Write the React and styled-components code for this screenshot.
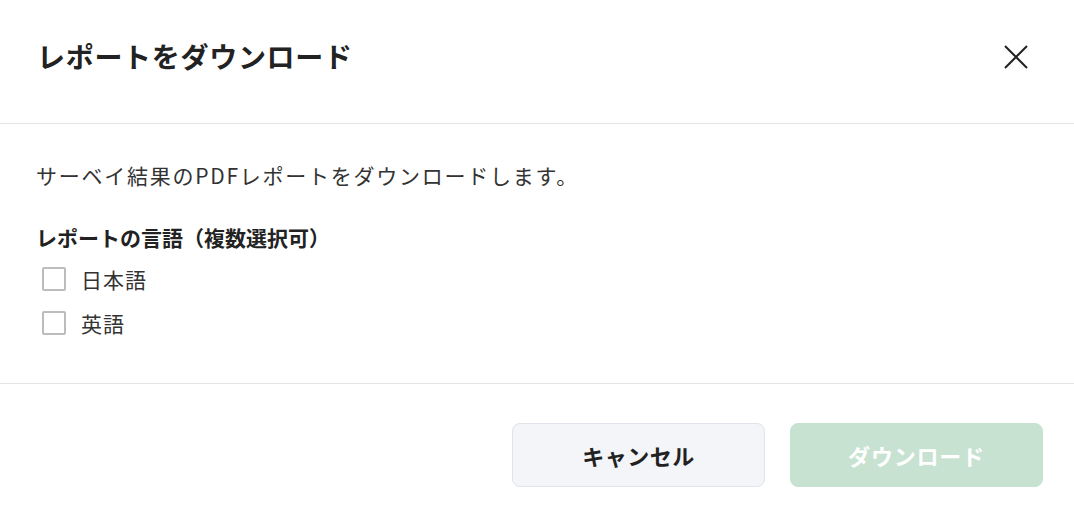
import React, { useState } from 'react'
import styled, { createGlobalStyle } from 'styled-components'

const GlobalStyle = createGlobalStyle`
  html, body {
    margin: 0;
    padding: 0;
    background: #ffffff;
  }
  body {
    font-family: "Noto Sans CJK JP", "Noto Sans", sans-serif;
    color: #222222;
  }
`

const Dialog = styled.div`
  width: 1074px;
  height: 522px;
  background: #fff;
  display: flex;
  flex-direction: column;
`

const Header = styled.div`
  height: 124px;
  box-sizing: border-box;
  padding: 38px 36px 0 37px;
  border-bottom: 1px solid #e4e4e4;
  display: flex;
  justify-content: space-between;
  align-items: flex-start;
`

const Title = styled.h2`
  margin: 0;
  font-size: 28px;
  line-height: 36px;
  font-weight: 700;
  letter-spacing: 0.7px;
  color: #222;
`

const CloseButton = styled.button`
  border: none;
  background: none;
  padding: 0;
  margin: 6px 9px 0 0;
  width: 26px;
  height: 26px;
  display: flex;
  align-items: center;
  justify-content: center;
  cursor: pointer;
  color: #222;
`

const Body = styled.div`
  padding: 35px 36px 38px 36px;
  border-bottom: 1px solid #e4e4e4;
`

const Lead = styled.p`
  margin: 0;
  font-size: 21px;
  line-height: 32px;
  letter-spacing: 1.75px;
  color: #333;
`

const Label = styled.div`
  margin-top: 30px;
  font-size: 21px;
  line-height: 32px;
  font-weight: 700;
  color: #222;
`

const Options = styled.div`
  margin-top: 4px;
  display: flex;
  flex-direction: column;
`

const Option = styled.label`
  height: 44px;
  display: flex;
  align-items: center;
  gap: 15px;
  padding-left: 6px;
  font-size: 21px;
  letter-spacing: 1px;
  color: #333;
  cursor: pointer;
`

const Box = styled.span`
  width: 24px;
  height: 24px;
  box-sizing: border-box;
  border: 2px solid ${p => (p.$checked ? '#3aa56a' : '#bcbcbc')};
  background: ${p => (p.$checked ? '#3aa56a' : '#fff')};
  border-radius: 2px;
`

const Footer = styled.div`
  flex: 1;
  display: flex;
  justify-content: flex-end;
  align-items: flex-start;
  gap: 25px;
  padding: 39px 31px 0 0;
`

const Button = styled.button`
  width: 253px;
  height: 64px;
  box-sizing: border-box;
  border-radius: 8px;
  font-family: inherit;
  font-size: 22px;
  font-weight: 700;
  letter-spacing: ${p => (p.$primary ? '0.8px' : '0.5px')};
  border: 1px solid ${p => (p.$primary ? '#c8e2d2' : '#e2e3ea')};
  background: ${p => (p.$primary ? '#c8e2d2' : '#f4f5f9')};
  color: ${p => (p.$primary ? '#ffffff' : '#222')};
  cursor: pointer;
`

const languages = ['日本語', '英語']

export default function App() {
  const [checked, setChecked] = useState({})

  return (
    <>
      <GlobalStyle />
      <Dialog>
        <Header>
          <Title>レポートをダウンロード</Title>
          <CloseButton aria-label="閉じる">
            <svg width="24" height="24" viewBox="0 0 24 24" fill="none" stroke="currentColor" strokeWidth="2">
              <path d="M1 1 L23 23 M23 1 L1 23" />
            </svg>
          </CloseButton>
        </Header>
        <Body>
          <Lead>サーベイ結果のPDFレポートをダウンロードします。</Lead>
          <Label>レポートの言語（複数選択可）</Label>
          <Options>
            {languages.map(l => (
              <Option key={l} onClick={() => setChecked({ ...checked, [l]: !checked[l] })}>
                <Box $checked={!!checked[l]} />
                {l}
              </Option>
            ))}
          </Options>
        </Body>
        <Footer>
          <Button>キャンセル</Button>
          <Button $primary disabled>ダウンロード</Button>
        </Footer>
      </Dialog>
    </>
  )
}
